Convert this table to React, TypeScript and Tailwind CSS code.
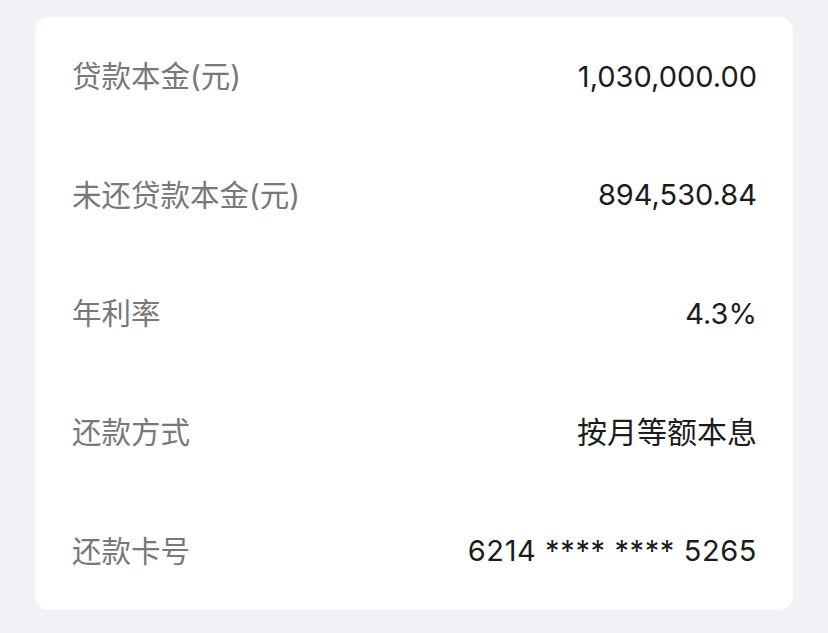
const rows = [
  { label: "贷款本金(元)", value: "1,030,000.00", cls: "text-[29px]" },
  { label: "未还贷款本金(元)", value: "894,530.84", cls: "text-[29px]" },
  { label: "年利率", value: "4.3%", cls: "text-[29px]" },
  { label: "还款方式", value: "按月等额本息", cls: "text-[30px]" },
  { label: "还款卡号", value: "6214 **** **** 5265", cls: "text-[29px] tracking-[0.6px]" },
];

export default function App() {
  return (
    <div
      className="w-[828px] h-[633px] bg-[#f1f2f6] pt-[17px] pl-[35px] pr-[35px]"
      style={{ fontFamily: '"Inter", "Noto Sans CJK SC", sans-serif' }}
    >
      <div className="bg-white rounded-[14px] h-[593px] flex flex-col">
        {rows.map((r) => (
          <div
            key={r.label}
            className="flex-1 flex items-center justify-between pl-[37px] pr-[36px]"
          >
            <span className="text-[29.5px] text-[#787878]">{r.label}</span>
            <span className={r.cls + " text-[#1c1c1c]"}>{r.value}</span>
          </div>
        ))}
      </div>
    </div>
  );
}
